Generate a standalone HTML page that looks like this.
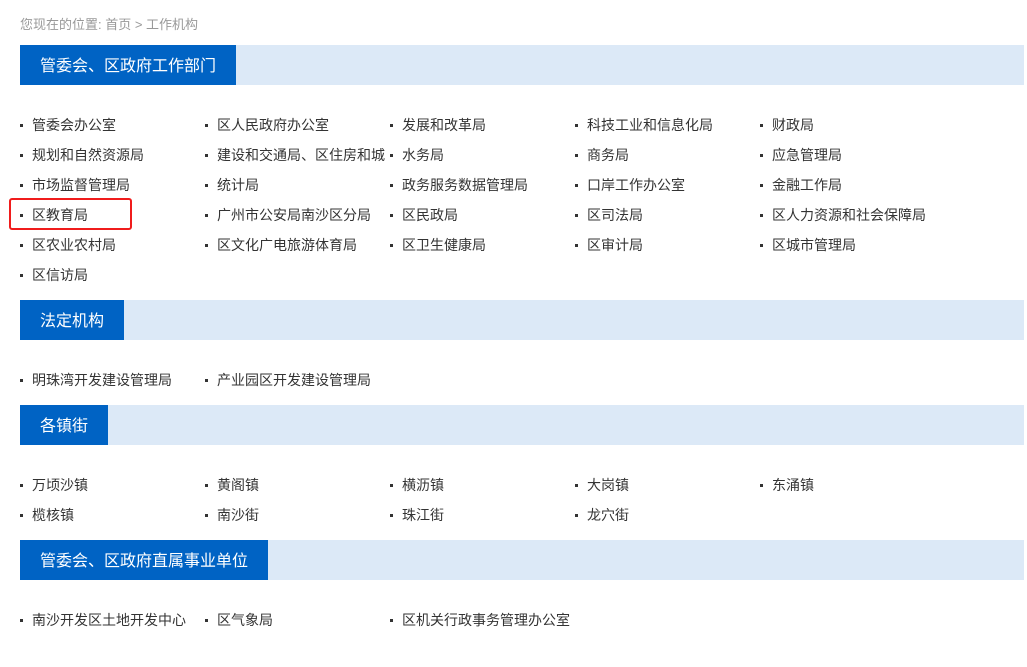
<!DOCTYPE html>
<html><head><meta charset="utf-8"><style>
*{margin:0;padding:0;box-sizing:border-box}
body{width:1027px;height:667px;background:#fff;font-family:"Liberation Sans","Noto Sans CJK SC",sans-serif;position:relative;overflow:hidden;color:#333}
.bc{position:absolute;left:20px;top:16px;font-size:13px;color:#999;line-height:18px}
.bar{position:absolute;left:20px;width:1004px;height:40px;background:#dce9f7}
.bar span{display:inline-block;height:40px;line-height:44px;background:#0063c4;color:#fff;font-size:16px;padding-left:20px}
.it{position:absolute;font-size:14px;line-height:20px;white-space:nowrap;padding-left:12px}
.it:before{content:"";position:absolute;left:0;top:9px;width:3px;height:3px;background:#333}
.red{position:absolute;left:9px;top:198px;width:123px;height:32px;border:2px solid #f01c1c;border-radius:3px}
</style></head><body>
<div class="bc">您现在的位置:&nbsp;首页 &gt; 工作机构</div>
<div class="bar" style="top:45px"><span style="width:216px">管委会、区政府工作部门</span></div>
<div class="bar" style="top:300px"><span style="width:104px">法定机构</span></div>
<div class="bar" style="top:405px"><span style="width:88px">各镇街</span></div>
<div class="bar" style="top:540px"><span style="width:248px">管委会、区政府直属事业单位</span></div>
<div class="red"></div>

<div class="it" style="left:20px;top:115px">管委会办公室</div>
<div class="it" style="left:205px;top:115px">区人民政府办公室</div>
<div class="it" style="left:390px;top:115px">发展和改革局</div>
<div class="it" style="left:575px;top:115px">科技工业和信息化局</div>
<div class="it" style="left:760px;top:115px">财政局</div>

<div class="it" style="left:20px;top:145px">规划和自然资源局</div>
<div class="it" style="left:205px;top:145px">建设和交通局、区住房和城</div>
<div class="it" style="left:390px;top:145px">水务局</div>
<div class="it" style="left:575px;top:145px">商务局</div>
<div class="it" style="left:760px;top:145px">应急管理局</div>

<div class="it" style="left:20px;top:175px">市场监督管理局</div>
<div class="it" style="left:205px;top:175px">统计局</div>
<div class="it" style="left:390px;top:175px">政务服务数据管理局</div>
<div class="it" style="left:575px;top:175px">口岸工作办公室</div>
<div class="it" style="left:760px;top:175px">金融工作局</div>

<div class="it" style="left:20px;top:205px">区教育局</div>
<div class="it" style="left:205px;top:205px">广州市公安局南沙区分局</div>
<div class="it" style="left:390px;top:205px">区民政局</div>
<div class="it" style="left:575px;top:205px">区司法局</div>
<div class="it" style="left:760px;top:205px">区人力资源和社会保障局</div>

<div class="it" style="left:20px;top:235px">区农业农村局</div>
<div class="it" style="left:205px;top:235px">区文化广电旅游体育局</div>
<div class="it" style="left:390px;top:235px">区卫生健康局</div>
<div class="it" style="left:575px;top:235px">区审计局</div>
<div class="it" style="left:760px;top:235px">区城市管理局</div>

<div class="it" style="left:20px;top:265px">区信访局</div>

<div class="it" style="left:20px;top:370px">明珠湾开发建设管理局</div>
<div class="it" style="left:205px;top:370px">产业园区开发建设管理局</div>

<div class="it" style="left:20px;top:475px">万顷沙镇</div>
<div class="it" style="left:205px;top:475px">黄阁镇</div>
<div class="it" style="left:390px;top:475px">横沥镇</div>
<div class="it" style="left:575px;top:475px">大岗镇</div>
<div class="it" style="left:760px;top:475px">东涌镇</div>

<div class="it" style="left:20px;top:505px">榄核镇</div>
<div class="it" style="left:205px;top:505px">南沙街</div>
<div class="it" style="left:390px;top:505px">珠江街</div>
<div class="it" style="left:575px;top:505px">龙穴街</div>

<div class="it" style="left:20px;top:610px">南沙开发区土地开发中心</div>
<div class="it" style="left:205px;top:610px">区气象局</div>
<div class="it" style="left:390px;top:610px">区机关行政事务管理办公室</div>
</body></html>
